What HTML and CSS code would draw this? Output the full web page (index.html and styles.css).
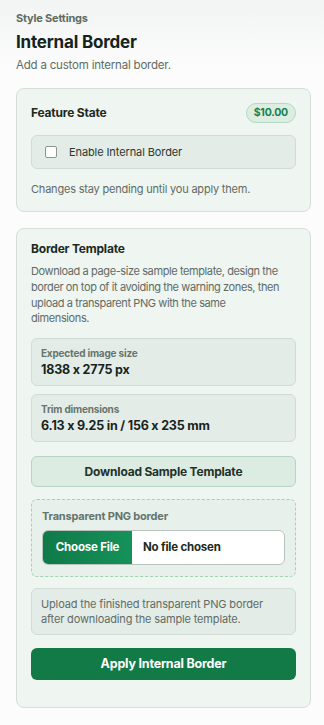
FILE: index.html
```html
<!DOCTYPE html>
<html lang="en">
<head>
<meta charset="UTF-8">
<meta name="viewport" content="width=device-width, initial-scale=1.0">
<title>Internal Border</title>
<link rel="stylesheet" href="styles.css">
</head>
<body>
<div class="panel">
    <p class="eyebrow">Style Settings</p>
    <h2 class="title">Internal Border</h2>
    <p class="subtitle">Add a custom internal border.</p>

    <section class="card card-state">
        <div class="card-head">
            <h3 class="card-title">Feature State</h3>
            <span class="price">$10.00</span>
        </div>
        <label class="toggle-row">
            <input type="checkbox" class="check">
            <span>Enable Internal Border</span>
        </label>
        <p class="note">Changes stay pending until you apply them.</p>
    </section>

    <section class="card card-template">
        <h3 class="card-title">Border Template</h3>
        <p class="desc">Download a page-size sample template, design the border on top of it avoiding the warning zones, then upload a transparent PNG with the same<br>dimensions.</p>

        <div class="info">
            <span class="info-label">Expected image size</span>
            <span class="info-value">1838 x 2775 px</span>
        </div>
        <div class="info info-trim">
            <span class="info-label">Trim dimensions</span>
            <span class="info-value">6.13 x 9.25 in / 156 x 235 mm</span>
        </div>

        <a href="#" class="btn-download">Download Sample Template</a>

        <div class="upload">
            <span class="upload-label">Transparent PNG border</span>
            <label class="file">
                <span class="file-btn">Choose File</span>
                <span class="file-name">No file chosen</span>
            </label>
        </div>

        <p class="hint">Upload the finished transparent PNG border after downloading the sample template.</p>

        <a href="#" class="btn-apply">Apply Internal Border</a>
    </section>
</div>
</body>
</html>
```

FILE: styles.css
```css
body,div,p,h2,h3,section{margin:0;padding:0;}
a{text-decoration:none;}
body{font:400 11.5px/16px Inter,"Noto Sans",sans-serif;font-feature-settings:"calt" 0;letter-spacing:-0.2px;color:#1b2a22;background:linear-gradient(#f2f4f3,#fbfcfb 70px);min-height:725px;}

.panel{padding:11px 13px 0 16px;display:flex;flex-direction:column;}
.eyebrow{font:700 11px/14px Inter,sans-serif;color:#5d6d64;}
.title{font:700 17px/22px Inter,sans-serif;color:#14231b;margin-top:6px;letter-spacing:-0.2px;}
.subtitle{font-size:11.5px;line-height:16px;color:#5f6b65;margin-top:4px;}

.card{background:#eff5f1;border:1px solid #d4dfd9;border-radius:8px;padding:14px 14px 14px;display:flex;flex-direction:column;}
.card-state{margin-top:15px;}
.card-template{margin-top:16px;padding-top:13px;padding-bottom:27px;}
.card-title{font:700 12px/14px Inter,sans-serif;color:#1b2a22;}

.card-head{display:flex;justify-content:space-between;align-items:center;height:20px;}
.price{font:700 10.5px/18px Inter,sans-serif;color:#17804c;background:#dceee2;border:1px solid #b6d8c2;border-radius:10px;padding:0 7px;}

.toggle-row{display:flex;align-items:center;gap:12px;height:32px;margin-top:12px;padding:0 13px;background:#e4ece7;border:1px solid #d1dcd6;border-radius:6px;color:#2a3830;font-size:11px;letter-spacing:-0.1px;}
.check{appearance:none;margin:0;width:12px;height:12px;background:#fff;border:1px solid #8d9691;border-radius:2px;}
.note{margin-top:12px;color:#5f6b65;font-size:11px;}

.desc{margin-top:8px;color:#5f6b65;font-size:11px;letter-spacing:-0.4px;line-height:15.8px;}

.info{display:flex;flex-direction:column;margin-top:11px;padding:8px 9px 7px;background:#e4ece7;border:1px solid #d1dcd6;border-radius:6px;}
.info-trim{margin-top:8px;}
.info-label{font:700 10px/13px Inter,sans-serif;color:#66766d;}
.info-value{font:700 12.5px/16px Inter,sans-serif;color:#17241d;margin-top:2px;}

.btn-download{display:block;margin-top:14px;height:29px;text-align:center;font:700 12px/29px Inter,sans-serif;color:#233129;background:#dcece2;border:1px solid #b8d4c2;border-radius:6px;}

.upload{display:flex;flex-direction:column;margin-top:12px;padding:10px 10px 11px;background:#e7f0ea;border:1px dashed #a3d2b4;border-radius:6px;}
.upload-label{font:700 11px/13px Inter,sans-serif;color:#65756c;}
.file{display:flex;margin-top:7px;height:33px;border:1px solid #b9c3bd;border-radius:6px;overflow:hidden;background:#fff;}
.file-btn{width:89px;text-align:center;font:700 11.5px/33px Inter,sans-serif;color:#fff;background:linear-gradient(90deg,#0f7a48,#16915a);}
.file-name{padding-left:11px;font:700 11.5px/33px Inter,sans-serif;color:#1b2a22;}

.hint{margin-top:11px;padding:8px 9px 7px;font-size:11px;letter-spacing:-0.15px;line-height:15px;color:#5f6b65;background:#e4ece7;border:1px solid #d1dcd6;border-radius:6px;}

.btn-apply{display:block;margin-top:13px;height:32px;text-align:center;font:700 12.5px/32px Inter,sans-serif;color:#fff;background:#117a47;border-radius:6px;}
```
